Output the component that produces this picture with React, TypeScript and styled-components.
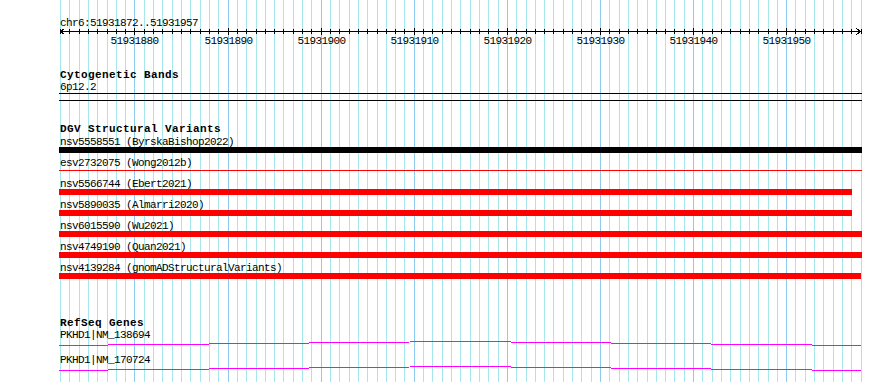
import React from 'react';
import styled, { createGlobalStyle } from 'styled-components';

const START = 51931872;
const END = 51931957;
const BP_PX = 9.31;
const TRACK_W = 803;

// local x of the grid line for base offset k (panel starts at page x=59)
const xAt = (k: number) => Math.round(1 + k * BP_PX);

const GlobalStyle = createGlobalStyle`
  html, body {
    margin: 0;
    padding: 0;
    background: #fff;
  }
  body {
    font-family: 'Liberation Mono', 'DejaVu Sans Mono', monospace;
    color: #000;
  }
`;

const Page = styled.div`
  min-height: 100vh;
  padding-left: 59px;
  box-sizing: border-box;
`;

const Panel = styled.div`
  position: relative;
  width: ${TRACK_W}px;
  min-height: 382px;
  padding-top: 17px;
  box-sizing: border-box;
`;

const GridLayer = styled.svg`
  position: absolute;
  left: 0;
  top: 0;
  width: 100%;
  height: 100%;
  z-index: 0;
  shape-rendering: crispEdges;
`;

const Content = styled.div`
  position: relative;
  z-index: 1;
  display: flex;
  flex-direction: column;
`;

const ScaleLabel = styled.div`
  height: 11px;
  padding-left: 1px;
  font-size: 11px;
  letter-spacing: -0.6px;
  line-height: 12px;
  white-space: pre;
`;

const RulerSvg = styled.svg`
  display: block;
  width: ${TRACK_W}px;
  height: 7px;
  shape-rendering: crispEdges;
`;

const TickLabels = styled.div`
  position: relative;
  height: 12px;
  font-size: 11px;
  letter-spacing: -0.6px;
  line-height: 12px;
`;

const TickLabel = styled.span`
  position: absolute;
  top: 0;
  transform: translateX(-50%);
  white-space: nowrap;
`;

const TrackTitle = styled.div<{ $gap: number }>`
  margin-top: ${(p) => p.$gap}px;
  height: 12px;
  padding-left: 1px;
  font-size: 11px;
  font-weight: 700;
  letter-spacing: 0.4px;
  line-height: 12px;
  white-space: pre;
`;

const FeatureLabel = styled.div<{ $h: number }>`
  height: ${(p) => p.$h}px;
  padding-left: 1px;
  font-size: 11px;
  letter-spacing: -0.6px;
  line-height: 12px;
  white-space: pre;
`;

const BandBox = styled.div`
  height: 8px;
  box-sizing: border-box;
  border-top: 1px solid #000;
  border-bottom: 1px solid #000;
`;

const VariantList = styled.div`
  margin-top: 1px;
  display: flex;
  flex-direction: column;
`;

const VariantRow = styled.div`
  display: flex;
  flex-direction: column;
  padding-bottom: 4px;
`;

const Bar = styled.div<{ $color: string; $thin?: boolean }>`
  height: ${(p) => (p.$thin ? 1 : 6)}px;
  margin: ${(p) => (p.$thin ? '2px 0 3px' : '0')};
  background: ${(p) => p.$color};
`;

const GeneRow = styled.div`
  display: flex;
  flex-direction: column;
`;

const HatSvg = styled.svg`
  display: block;
  width: ${TRACK_W}px;
  height: 13px;
  shape-rendering: crispEdges;
`;

const variants = [
  { id: 'nsv5558551', source: 'ByrskaBishop2022', color: '#000', width: 803 },
  { id: 'esv2732075', source: 'Wong2012b', color: '#f00', width: 803, thin: true },
  { id: 'nsv5566744', source: 'Ebert2021', color: '#f00', width: 793 },
  { id: 'nsv5890035', source: 'Almarri2020', color: '#f00', width: 793 },
  { id: 'nsv6015590', source: 'Wu2021', color: '#f00', width: 803 },
  { id: 'nsv4749190', source: 'Quan2021', color: '#f00', width: 803 },
  { id: 'nsv4139284', source: 'gnomADStructuralVariants', color: '#f00', width: 802 },
];

const genes = ['PKHD1|NM_138694', 'PKHD1|NM_170724'];

const baseCount = END - START + 2;
const isMajor = (k: number) => (START + k) % 10 === 0;

const Grid = () => (
  <GridLayer>
    {Array.from({ length: baseCount }, (_, k) => (
      <rect
        key={k}
        x={xAt(k)}
        y={0}
        width={1}
        height="100%"
        fill={isMajor(k) ? '#8ccaee' : '#a6e6ee'}
      />
    ))}
  </GridLayer>
);

const Ruler = () => (
  <RulerSvg>
    <rect x={1} y={3} width={801} height={1} fill="#000" />
    {Array.from({ length: baseCount }, (_, k) =>
      isMajor(k) ? (
        <rect key={k} x={xAt(k)} y={0} width={1} height={7} fill="#000" />
      ) : (
        <rect key={k} x={xAt(k)} y={1} width={1} height={5} fill="#000" />
      )
    )}
    <path d="M5.5 0.5 L1.5 3.5 L5.5 6.5" fill="none" stroke="#000" strokeWidth={1} />
    <path d="M797.5 0.5 L801.5 3.5 L797.5 6.5" fill="none" stroke="#000" strokeWidth={1} />
  </RulerSvg>
);

const App = () => {
  const majors = Array.from({ length: baseCount }, (_, k) => k).filter(
    (k) => isMajor(k) && k > 0 && k < baseCount - 2
  );

  return (
    <Page>
      <GlobalStyle />
      <Panel>
        <Grid />
        <Content>
          <ScaleLabel>chr6:{START}..{END}</ScaleLabel>
          <Ruler />
          <TickLabels>
            {majors.map((k) => (
              <TickLabel key={k} style={{ left: xAt(k) + 0.5 }}>
                {START + k}
              </TickLabel>
            ))}
          </TickLabels>

          <TrackTitle $gap={22}>Cytogenetic Bands</TrackTitle>
          <FeatureLabel $h={12}>6p12.2</FeatureLabel>
          <BandBox />

          <TrackTitle $gap={22}>DGV Structural Variants</TrackTitle>
          <VariantList>
            {variants.map((v) => (
              <VariantRow key={v.id}>
                <FeatureLabel $h={11}>
                  {v.id} ({v.source})
                </FeatureLabel>
                <Bar $color={v.color} $thin={v.thin} style={{ width: v.width }} />
              </VariantRow>
            ))}
          </VariantList>

          <TrackTitle $gap={34}>RefSeq Genes</TrackTitle>
          {genes.map((g) => (
            <GeneRow key={g}>
              <FeatureLabel $h={12}>{g}</FeatureLabel>
              <HatSvg>
                <path d="M0 4.5 L401 0.5 L802 4.5" fill="none" stroke="#f0f" strokeWidth={1} />
              </HatSvg>
            </GeneRow>
          ))}
        </Content>
      </Panel>
    </Page>
  );
};

export default App;
